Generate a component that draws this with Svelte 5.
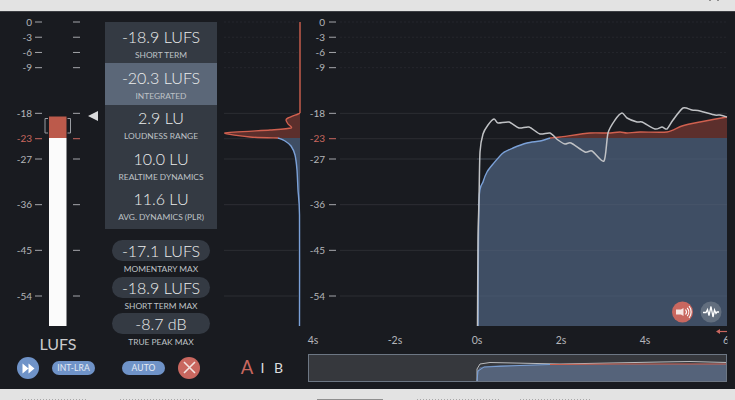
<script>
  const scale = [0, -3, -6, -9, -18, -23, -27, -36, -45, -54];
  const yOf = (d) => 22 + (-d * 274) / 54;
  const stats = [
    { v: '-18.9 LUFS', l: 'SHORT TERM' },
    { v: '-20.3 LUFS', l: 'INTEGRATED', on: true },
    { v: '2.9 LU', l: 'LOUDNESS RANGE' },
    { v: '10.0 LU', l: 'REALTIME DYNAMICS' },
    { v: '11.6 LU', l: 'AVG. DYNAMICS (PLR)' }
  ];
  const maxes = [
    { v: '-17.1 LUFS', l: 'MOMENTARY MAX' },
    { v: '-18.9 LUFS', l: 'SHORT TERM MAX' },
    { v: '-8.7 dB', l: 'TRUE PEAK MAX' }
  ];
  const times = [[313, '4s'], [395, '-2s'], [477, '0s'], [561, '2s'], [645, '4s'], [726, '6']];
  const parse = (s) => s.split(' ').map((p) => p.split(',').map(Number));
  // Catmull-Rom through the sampled points, so the traces read as curves
  const smooth = (s) => {
    const p = parse(s);
    let d = `M${p[0][0]} ${p[0][1]}`;
    for (let i = 0; i < p.length - 1; i++) {
      const a = p[Math.max(i - 1, 0)], b = p[i], c = p[i + 1], e = p[Math.min(i + 2, p.length - 1)];
      const k = 0.12;
      d += `C${b[0] + (c[0] - a[0]) * k} ${b[1] + (c[1] - a[1]) * k} ${c[0] - (e[0] - b[0]) * k} ${c[1] - (e[1] - b[1]) * k} ${c[0]} ${c[1]}`;
    }
    return d;
  };
  const white = smooth('477.5,326 478,240 479,200 480,152 483,134 488,125 494,119 498,123 509,122 519,128 529,127 540,134 550,133 558,140 565,144 571,143 585,152 592,151 604,161 608,133 615,120 622,113 627,118 637,122 642,122 655,129 662,127 667,129 673,120 683,108 692,110 700,111 715,115 720,115 727,117');
  const blueTop = smooth('478,326 479,200 483,182 487,172 493,164 503,153 513,148 527,143 540,141 550,138');
  const redTop = smooth('550,138 560,137 590,133 608,133 620,132 627,133 640,132 667,132 682,126 700,122 727,117');
  const histRed = smooth('300,113 298,114 288,118 286,120 288,124 291,128 270,130 225,133 250,137 278,138');
  const histBlue = smooth('278,138 285,141 291,146 295,155 297,170 298,190 299.5,215 299.5,326');
</script>

<div class="app">
  <div class="bar top">
    <i class="nub"></i><i class="nub"></i>
  </div>
  <div class="main">
    <div class="left">
      <svg class="meter" width="105" height="320" viewBox="0 12 105 320">
        {#each scale as d}
          <text class="tick" class:hot={d === -23} x="32" y={yOf(d) + 3.5} text-anchor="end">{d}</text>
          <rect class="tk" class:hotf={d === -23} x="35" y={yOf(d) - 0.5} width="7" height="1" />
          <rect class="tk" class:hotf={d === -23} x="73" y={yOf(d) - 0.5} width="7" height="1" />
        {/each}
        <rect x="49" y="138" width="17.5" height="188" fill="#fbfbfb" />
        <rect x="49" y="116.5" width="17.5" height="21.5" fill="#bc5a4b" />
        <path class="brk" d="M48 118.5h-3v14.5h3M67.5 118.5h3v14.5h-3" />
        <path d="M88 116L98 111V121Z" fill="#d8d9db" />
      </svg>
      <div class="lufs">LUFS</div>
      <div class="controls c1">
        <button class="round blue" aria-label="Skip">
          <svg width="13" height="11" viewBox="0 0 13 11"><path d="M0.5 0.5L6.5 5.5L0.5 10.5ZM6.5 0.5L12.5 5.5L6.5 10.5Z" fill="#fff" /></svg>
        </button>
        <span class="pill">INT-LRA</span>
      </div>
    </div>

    <div class="center">
      <div class="card">
        {#each stats as s}
          <div class="row" class:on={s.on}>
            <div class="val">{s.v}</div>
            <div class="lab">{s.l}</div>
          </div>
        {/each}
      </div>
      <div class="maxes">
        {#each maxes as m}
          <div class="mx">
            <div class="cap">{m.v}</div>
            <div class="lab">{m.l}</div>
          </div>
        {/each}
      </div>
      <div class="controls c2">
        <span class="pill">AUTO</span>
        <button class="round red" aria-label="Close">
          <svg width="13" height="13" viewBox="0 0 13 13"><path d="M1 1L12 12M12 1L1 12" stroke="#f3e3e0" stroke-width="1.6" /></svg>
        </button>
      </div>
    </div>

    <svg class="chart" width="518" height="377" viewBox="217 12 518 377">
      {#each scale as d}
        <line class={d < -10 ? 'gridl' : 'gridf'} x1="224" x2="298" y1={yOf(d)} y2={yOf(d)} />
        <line class={d < -10 ? 'gridl' : 'gridf'} x1="340" x2="727" y1={yOf(d)} y2={yOf(d)} />
      {/each}

      <path d="{blueTop}L727 138V326Z" fill="#3f4e64" />
      <path d="{redTop}V138Z" fill="#5c2f2c" />
      <line x1="477" x2="727" y1={yOf(-27)} y2={yOf(-27)} class="over" />
      <line x1="477" x2="727" y1={yOf(-36)} y2={yOf(-36)} class="over" />
      <line x1="477" x2="727" y1={yOf(-45)} y2={yOf(-45)} class="over" />
      <line x1="477" x2="727" y1={yOf(-54)} y2={yOf(-54)} class="over" />
      <path d={blueTop} class="ln" stroke="#7ba1d8" />
      <path d={redTop} class="ln" stroke="#d0604f" />
      <path d={white} class="ln wh" />

      <path d="{histRed}L300 138Z" fill="#5c2f2c" />
      <path d="M278 138L285 141L291 146L295 155L297 170L298 190L299.5 215H300V138Z" fill="#3f4e64" />
      <path d="M300 22V113" class="ln" stroke="#d0604f" />
      <path d={histRed} class="ln" stroke="#d0604f" />
      <path d={histBlue} class="ln" stroke="#7ba1d8" />

      {#each scale as d}
        <text class="tick" class:hot={d === -23} x="325" y={yOf(d) + 3.5} text-anchor="end">{d}</text>
        <rect class="tk" class:hotf={d === -23} x="329" y={yOf(d) - 0.5} width="7" height="1" />
      {/each}

      {#each times as [x, t]}
        <text class="time" x={x} y="344" text-anchor="middle">{t}</text>
      {/each}
      <rect x="727.5" y="333" width="8" height="16" fill="#191b20" />
      <path d="M719 331.5h8" stroke="#c9675f" stroke-width="1.2" fill="none" />
      <path d="M716 331.5l4-2.5v5Z" fill="#c9675f" />

      <circle cx="682.5" cy="312" r="10.5" fill="#c9675f" />
      <path d="M676 309.5h5l2.5-1.5v8l-2.5-1.5H676Z" fill="#f6e4e1" />
      <path d="M685.5 309.5a4 4 0 0 1 0 5M687.2 307.8a6.5 6.5 0 0 1 0 8.4M689 306a9.5 9.5 0 0 1 0 12" fill="none" stroke="#fff" stroke-width="1.1" />
      <circle cx="711" cy="312" r="10.5" fill="#626e7e" />
      <polyline points="703,312.5 706,312.5 707.5,309.5 709,315.5 711,306.5 713,317 714.5,310 716,313.5 717,312 719,312" fill="none" stroke="#fff" stroke-width="1.3" />

      <text class="ab a" x="247" y="374" text-anchor="middle">A</text>
      <text class="ab i" x="262.5" y="373" text-anchor="middle">I</text>
      <text class="ab b" x="278.5" y="373" text-anchor="middle">B</text>

      <rect x="308.5" y="354.5" width="418" height="27" fill="#36383d" />
      <polygon points="477,381.5 477,371 480,367 500,365 550,364.5 727,363.5 727,381.5" fill="#55637a" />
      <polyline points="477,381 477,369 480,364 490,362.5 560,364 610,363 660,362 690,361.5 727,362.5" class="thin" stroke="#b9bbbe" />
      <polyline points="477,381 478,371 484,367 520,365.5 550,364.5" class="thin" stroke="#7ba1d8" />
      <polyline points="550,364.5 620,364 680,364 727,364" class="thin" stroke="#d0604f" />
      <rect x="308.5" y="354.5" width="418" height="27" fill="none" stroke="#6d7784" />
    </svg>
  </div>
  <div class="bar bottom">
    <i class="dots d1"></i><i class="dots d2"></i><i class="solid"></i><i class="dots d3"></i><i class="dots d4"></i>
  </div>
</div>

<style>
  :global(body) {
    margin: 0;
    background: #191b20;
  }
  .app {
    width: 735px;
    height: 400px;
    display: flex;
    flex-direction: column;
    overflow: hidden;
    font-family: Lato, 'Liberation Sans', sans-serif;
    color: #d7d8da;
  }
  .bar {
    background: #e3e3e3;
    height: 11px;
    display: flex;
    flex: none;
  }
  .top {
    justify-content: flex-end;
    gap: 6px;
    padding-right: 16px;
    box-sizing: border-box;
    border: 0;
  }
  .nub {
    width: 2px;
    height: 1px;
    background: #8f8f8f;
  }
  .main {
    flex: 1;
    display: flex;
    background: #191b20;
    border-top: 1px solid #3c3e43;
    min-height: 0;
  }
  .left {
    width: 105px;
    flex: none;
  }
  .meter,
  .chart {
    display: block;
  }
  .lufs {
    margin-left: 11px;
    height: 24px;
    line-height: 24px;
    text-align: center;
    font-size: 16px;
    color: #c9cacc;
  }
  .controls {
    height: 21px;
    display: flex;
    align-items: center;
  }
  .c1 {
    margin-top: 1.5px;
    padding-left: 17px;
    gap: 13px;
  }
  .c2 {
    margin-top: 7.7px;
    padding-left: 17px;
    gap: 13px;
  }
  .round {
    width: 22px;
    height: 22px;
    border-radius: 50%;
    border: 0;
    padding: 0;
    display: flex;
    align-items: center;
    justify-content: center;
    flex: none;
  }
  .blue {
    background: #6f93c8;
  }
  .red {
    background: #c9675f;
  }
  .pill {
    width: 43px;
    height: 14px;
    line-height: 14px;
    border-radius: 7px;
    background: #6f93c8;
    color: #e6ebf3;
    font-size: 8.5px;
    text-align: center;
    letter-spacing: 0.1px;
  }
  .center {
    width: 112px;
    flex: none;
    padding-top: 10px;
  }
  .card {
    height: 207px;
    box-sizing: border-box;
    padding-top: 4px;
    background: #343a43;
  }
  .row {
    height: 40.6px;
    box-sizing: border-box;
    text-align: center;
  }
  .on {
    height: 41.7px;
    margin: -3.3px 0 2.2px;
    padding-top: 3.3px;
    background: #5b6778;
  }
  .val,
  .cap {
    font-size: 16px;
    font-weight: 300;
    line-height: 22px;
    color: #eceded;
  }
  .lab {
    font-size: 8.4px;
    line-height: 12px;
    margin-top: 1px;
    text-align: center;
    color: #bfc2c6;
  }
  .maxes {
    margin-top: 11px;
  }
  .mx {
    height: 36.6px;
    padding: 0 7px;
  }
  .cap {
    height: 21px;
    line-height: 21px;
    border-radius: 11px;
    background: #343a43;
    text-align: center;
  }
  .mx .lab {
    margin-top: 2px;
    margin-left: -7px;
    margin-right: -7px;
  }
  .tick {
    font-family: Lato, 'Liberation Sans', sans-serif;
    font-size: 10px;
    fill: #b4b6ba;
  }
  .hot {
    fill: #c9675f;
  }
  .tk {
    fill: #a4a6aa;
  }
  .hotf {
    fill: #c9675f;
  }
  .brk {
    fill: none;
    stroke: #9a9da2;
    stroke-width: 1;
  }
  .gridl {
    stroke: #2c2e33;
    stroke-width: 1;
  }
  .gridf {
    stroke: #25272c;
    stroke-width: 1;
    stroke-dasharray: 2 2;
  }
  .over {
    stroke: #4d5a6e;
    stroke-width: 1;
    opacity: 0.6;
  }
  .ln {
    fill: none;
    stroke-width: 1.4;
    stroke-linejoin: round;
  }
  .wh {
    stroke: #c0c2c5;
    stroke-width: 1.5;
  }
  .thin {
    fill: none;
    stroke-width: 1;
  }
  .time {
    font-family: Lato, 'Liberation Sans', sans-serif;
    font-size: 10.5px;
    fill: #b4b6ba;
  }
  .ab {
    font-family: Lato, 'Liberation Sans', sans-serif;
  }
  .a {
    font-size: 18.5px;
    fill: #c9675f;
  }
  .i,
  .b {
    font-size: 14px;
    fill: #dcdddf;
  }
  .bottom {
    align-items: flex-end;
    box-sizing: border-box;
    position: relative;
  }
  .dots,
  .solid {
    height: 1px;
    flex: none;
  }
  .dots {
    background: repeating-linear-gradient(90deg, #a8a8a8 0 1px, transparent 1px 3px);
  }
  .solid {
    width: 66px;
    margin-left: 117px;
    background: #8f8f8f;
  }
  .d1 {
    width: 66px;
    margin-left: 22px;
  }
  .d2 {
    width: 80px;
    margin-left: 32px;
  }
  .d3 {
    width: 83px;
    margin-left: 34px;
  }
  .d4 {
    width: 70px;
    margin-left: 20px;
  }
</style>
